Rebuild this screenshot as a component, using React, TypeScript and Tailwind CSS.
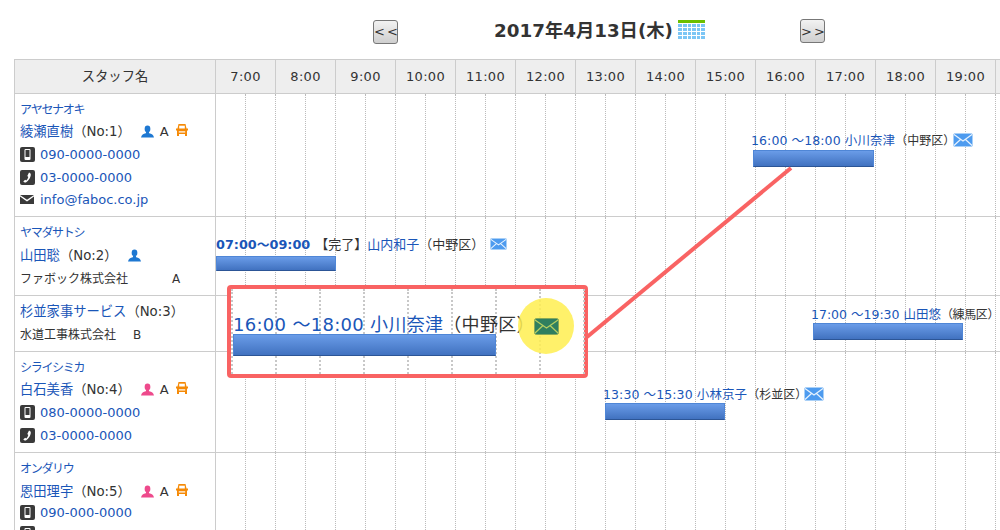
import React from 'react';

const font = "font-['DejaVu_Sans','Noto_Sans_CJK_JP',sans-serif]";
const hours = [7, 8, 9, 10, 11, 12, 13, 14, 15, 16, 17, 18, 19];

function PhoneIcon() {
  return (
    <svg width="15" height="15" viewBox="0 0 15 15" className="shrink-0">
      <rect width="15" height="15" rx="2" fill="#3a3a3a" />
      <rect x="4.500" y="2" width="6" height="11" rx="1" fill="#fff" />
      <rect x="5.500" y="3" width="4" height="7" fill="#3a3a3a" />
    </svg>
  );
}

function TelIcon() {
  return (
    <svg width="15" height="15" viewBox="0 0 15 15" className="shrink-0">
      <rect width="15" height="15" rx="2" fill="#3a3a3a" />
      <path d="M9 2.500c1.600.6 2.200 1.600 1.600 3.400-.7 2.700-2.200 4.800-4.400 6.300-1 .6-2.200.3-2.900-.8l1.800-1.600 1.200.7c1-1 1.600-2.200 2-3.600l-1-.9z" fill="#fff" />
    </svg>
  );
}

function MailIcon() {
  return (
    <svg width="14" height="9" viewBox="0 0 14 9" className="shrink-0 mr-[1px]">
      <path d="M0 0h14L7 4.800z" fill="#3a3a3a" />
      <path d="M0 1.600V9h14V1.600L7 6.400z" fill="#3a3a3a" />
    </svg>
  );
}

function PersonIcon({ color }: { color: string }) {
  return (
    <svg width="13" height="13" viewBox="0 0 14 13" className="shrink-0">
      <ellipse cx="7" cy="3.700" rx="3.100" ry="3.700" fill={color} />
      <path d="M5.500 7h3l.3 1.300c2.700.5 4.600 1.500 5.200 4.700H0c.6-3.200 2.500-4.200 5.200-4.700z" fill={color} />
    </svg>
  );
}

function CarIcon() {
  return (
    <svg width="12" height="12" viewBox="0 0 12 12" className="shrink-0">
      <path d="M2.500 0h7l1 4.500H12v2h-1V12H9v-2H3v2H1V6.500H0v-2h1.500z" fill="#f58a07" />
      <rect x="3.200" y="1.700" width="5.600" height="2.800" fill="#fff" />
      <rect x="2.800" y="7.300" width="6.400" height="1.200" fill="#fff" />
    </svg>
  );
}

// 青い封筒アイコン
function EnvelopeIcon({ className }: { className?: string }) {
  return (
    <svg viewBox="0 0 20 14" className={className}>
      <rect x="0.500" y="0.500" width="19" height="13" rx="1.500" fill="#4d9bef" stroke="#a9d0f7" />
      <path d="M1 1.500 10 8l9-6.500M1 12.500 7.500 6.500M19 12.500 12.500 6.500" fill="none" stroke="#e8f3fe" strokeWidth="1.200" />
    </svg>
  );
}

function CalendarIcon() {
  return (
    <svg width="27" height="19" viewBox="0 0 27 19" className="shrink-0">
      <rect width="27" height="3" fill="#6cbf00" />
      <rect y="4" width="27" height="15" fill="#7cc6f5" />
      {[4, 9, 13, 18, 22].map((x) => (
        <rect key={x} x={x} y="4" width="1" height="15" fill="#fff" />
      ))}
      {[7, 11, 15].map((y) => (
        <rect key={y} x="0" y={y} width="27" height="1" fill="#fff" />
      ))}
    </svg>
  );
}

function Link({ children, className = '' }: { children: React.ReactNode; className?: string }) {
  return <span className={`text-[#1a56b8] ${className}`}>{children}</span>;
}

function Kana({ children, leading }: { children: React.ReactNode; leading: string }) {
  return <div className={`text-[12px] tracking-[-1.300px] ${leading} text-[#1a56b8]`}>{children}</div>;
}

function Bar({ className }: { className: string }) {
  return (
    <div className={`absolute ${className} bg-gradient-to-b from-[#6a9ce8] to-[#4172c0] border border-[#4f86d6] border-b-[#2c5596]`} />
  );
}

function NavButton({ label }: { label: string }) {
  return (
    <button className="w-[25px] h-[24px] rounded-[3px] border border-[#777] bg-gradient-to-b from-[#f2f2f2] to-[#cfcfcf] text-[13px] text-[#333] tracking-[2px] leading-none">
      {label}
    </button>
  );
}

function PersonRow({ children, h, pt = 'pt-[6px]' }: { children: React.ReactNode; h: string; pt?: string }) {
  return (
    <div className={`flex ${h} border-b border-[#ccc]`}>
      <div className={`w-[202px] shrink-0 border-l border-r border-[#ccc] pl-[5px] ${pt} text-[13.300px] text-[#333]`}>
        {children}
      </div>
      <div className="flex-1 flex">
        {hours.map((hour) => (
          <div key={hour} className="w-[60px] shrink-0 flex border-r border-dotted border-[#bbb]">
            <div className="w-[30px] border-r border-dotted border-[#bbb]" />
          </div>
        ))}
      </div>
    </div>
  );
}

function NameRow({ name, no, color, car = true }: { name: string; no: number; color: string; car?: boolean }) {
  return (
    <div className="flex items-center h-[23px]">
      <Link>{name}</Link>
      <span>（No:{no}）</span>
      <span className="ml-[10px]"><PersonIcon color={color} /></span>
      {car && <span className="ml-[6px] text-[13px]">A</span>}
      {car && <span className="ml-[7px] -mt-[3px]"><CarIcon /></span>}
    </div>
  );
}

function Contact({ icon, text, h = 'h-[23px]' }: { icon?: React.ReactNode; text?: string; h?: string }) {
  return (
    <div className={`flex items-center ${h} gap-[5px] text-[13px]`}>
      {icon}
      {text && <Link>{text}</Link>}
    </div>
  );
}

export default function App() {
  return (
    <div className={`relative w-[1000px] h-[530px] overflow-hidden bg-white ${font} text-[#333]`}>
      <div className="flex items-start h-[59px] pt-[19px]">
        <div className="ml-[373px]"><NavButton label="<<" /></div>
        <div className="ml-[96px] w-[306px] h-[24px] flex items-center text-[18.300px] font-bold text-[#333] whitespace-nowrap">
          <span>2017年4月13日(木)</span>
          <span className="ml-[5px] -mt-[4px]"><CalendarIcon /></span>
        </div>
        <NavButton label=">>" />
      </div>

      <div className="ml-[14px] w-[1100px] relative">
        <div className="flex h-[35px] bg-[#eee] border border-[#ccc] text-[13px] text-[#333]">
          <div className="w-[201px] shrink-0 border-r border-[#ccc] flex items-center justify-center text-[13.300px]">スタッフ名</div>
          {hours.map((hour) => (
            <div key={hour} className="w-[60px] shrink-0 border-r border-[#ccc] flex items-center justify-center tracking-[0.3px]">
              {hour}:00
            </div>
          ))}
        </div>

        <PersonRow h="h-[123px]">
          <Kana leading="leading-[20px]">アヤセナオキ</Kana>
          <NameRow name="綾瀬直樹" no={1} color="#1e78d2" />
          <Contact icon={<PhoneIcon />} text="090-0000-0000" />
          <Contact icon={<TelIcon />} text="03-0000-0000" />
          <Contact icon={<MailIcon />} text="info@faboc.co.jp" h="h-[21px]" />
        </PersonRow>

        <PersonRow h="h-[79px]">
          <Kana leading="leading-[21px]">ヤマダサトシ</Kana>
          <NameRow name="山田聡" no={2} color="#1e78d2" car={false} />
          <div className="flex items-center h-[23px] text-[12px]">
            <span>ファボック株式会社</span>
            <span className="ml-[44px]">A</span>
          </div>
        </PersonRow>

        <PersonRow h="h-[56px]" pt="pt-[5px]">
          <div className="flex items-center h-[22px]"><Link>杉並家事サービス</Link><span>（No:3）</span></div>
          <div className="flex items-center h-[24px] text-[12px]"><span>水道工事株式会社</span><span className="ml-[17px]">B</span></div>
        </PersonRow>

        <PersonRow h="h-[101px]" pt="pt-[7px]">
          <Kana leading="leading-[19px]">シライシミカ</Kana>
          <NameRow name="白石美香" no={4} color="#ee4a8c" />
          <Contact icon={<PhoneIcon />} text="080-0000-0000" />
          <Contact icon={<TelIcon />} text="03-0000-0000" />
        </PersonRow>

        <PersonRow h="h-[100px]">
          <Kana leading="leading-[21px]">オンダリウ</Kana>
          <NameRow name="恩田理宇" no={5} color="#ee4a8c" />
          <Contact icon={<PhoneIcon />} text="090-000-0000" h="h-[19px]" />
          <Contact icon={<PhoneIcon />} />
        </PersonRow>
      </div>

      {/* 予定はタイムライン上の時刻で配置する */}
      <div className="absolute left-[751px] top-[132px] flex items-center whitespace-nowrap text-[12.500px] leading-[18px]">
        <Link className="tracking-[0.1px]">16:00 ～18:00 小川奈津</Link><span className="text-[12px]">（中野区）</span>
        <EnvelopeIcon className="w-[20px] h-[14px] -ml-[2px] -mt-[2px]" />
      </div>
      <Bar className="left-[753px] top-[150px] w-[121px] h-[17px]" />

      <div className="absolute left-[216px] top-[236px] flex items-center whitespace-nowrap text-[13px] leading-[18px]">
        <span className="font-bold text-[#1a56b8] text-[12.800px]">07:00～09:00</span>
        <span className="ml-[5px]">【完了】</span><Link>山内和子</Link><span>（中野区）</span>
        <EnvelopeIcon className="w-[17px] h-[12px] ml-[6px] -mt-[2px]" />
      </div>
      <Bar className="left-[216px] top-[256px] w-[120px] h-[15px]" />

      <div className="absolute left-[811px] top-[306px] flex items-center whitespace-nowrap text-[12.500px] leading-[18px]">
        <Link>17:00 ～19:30 山田悠</Link><span className="text-[12px] tracking-[-0.400px]">（練馬区）</span>
      </div>
      <Bar className="left-[813px] top-[323px] w-[150px] h-[17px]" />

      <div className="absolute left-[603px] top-[386px] flex items-center whitespace-nowrap text-[12.500px] leading-[18px]">
        <Link className="tracking-[0.1px]">13:30 ～15:30 小林京子</Link><span className="text-[12px]">（杉並区）</span>
        <EnvelopeIcon className="w-[20px] h-[14px] -ml-[3px] -mt-[2px]" />
      </div>
      <Bar className="left-[605px] top-[403px] w-[120px] h-[17px]" />

      {/* 拡大吹き出し */}
      <svg className="absolute left-0 top-0 pointer-events-none" width="1000" height="530">
        <line x1="587" y1="337" x2="791" y2="168" stroke="#f96363" strokeWidth="4" />
      </svg>
      <div className="absolute left-[227px] top-[285px] w-[361px] h-[93px] bg-white border-4 border-[#f96363] rounded-[4px]">
        <div className="absolute inset-0 flex">
          {[0, 1, 2, 3, 4, 5, 6, 7, 8].map((i) => (
            <div key={i} className="w-[44px] shrink-0 border-l-2 border-dotted border-[#c8c8c8]" />
          ))}
        </div>
        <div className="absolute left-[2px] top-[24px] whitespace-nowrap text-[18px] leading-[24px]">
          <Link className="tracking-[0.300px]">16:00 ～18:00 小川奈津</Link><span className="tracking-[0.300px]">（中野区）</span>
        </div>
        <Bar className="left-[2px] top-[45px] w-[263px] h-[22px]" />
        <div className="absolute left-[287px] top-[9px] w-[56px] h-[56px] rounded-full bg-[#ffee50]/85 flex items-center justify-center">
          <svg viewBox="0 0 25 17" className="w-[25px] h-[17px]">
            <rect x="0.500" y="0.500" width="24" height="16" rx="2" fill="#2f7f5f" stroke="#86a85a" />
            <path d="M1 2 12.500 10 24 2M1 15 9 7.500M24 15 16 7.500" fill="none" stroke="#b6cf62" strokeWidth="1.200" />
          </svg>
        </div>
      </div>
    </div>
  );
}
